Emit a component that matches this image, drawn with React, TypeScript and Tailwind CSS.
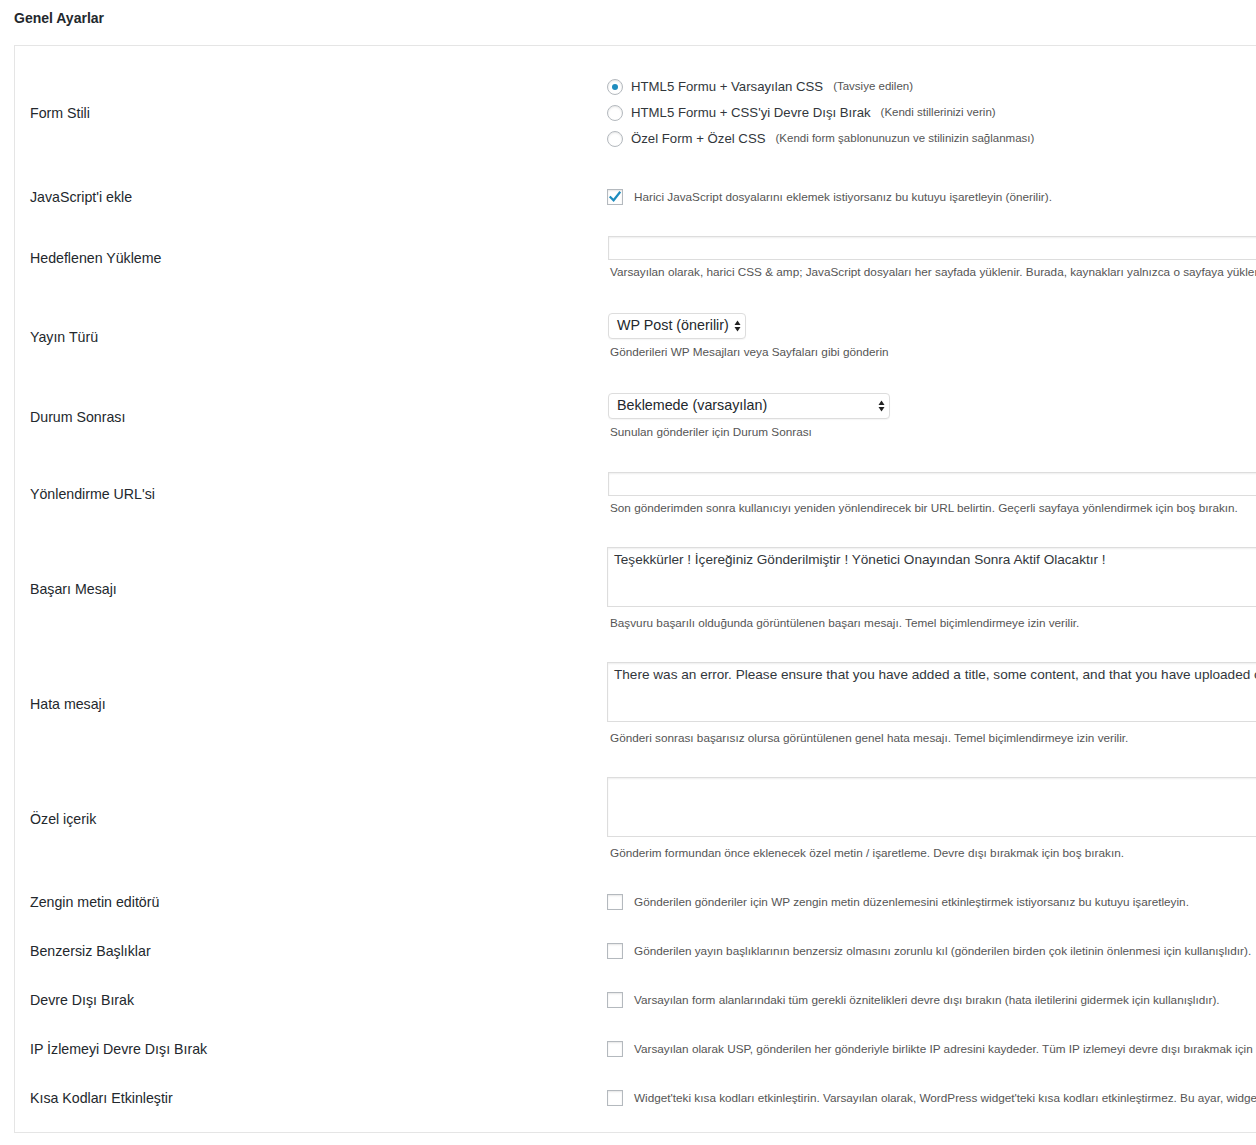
import React from "react";

const FONT = { fontFamily: '"Liberation Sans", Arial, sans-serif' };

function Radio({ checked }: { checked?: boolean }) {
  return (
    <span className="flex h-4 w-4 shrink-0 items-center justify-center rounded-full border border-[#b4b9be] bg-white shadow-[inset_0_1px_2px_rgba(0,0,0,0.1)]">
      {checked && <span className="h-[6px] w-[6px] rounded-full bg-[#1e8cbe]" />}
    </span>
  );
}

function Checkbox({ checked }: { checked?: boolean }) {
  return (
    <span className="relative flex h-4 w-4 shrink-0 items-center justify-center border border-[#b4b9be] bg-white shadow-[inset_0_1px_2px_rgba(0,0,0,0.1)]">
      {checked && (
        <svg width="14" height="14" viewBox="0 0 14 14" className="absolute left-[0px] top-[0px]">
          <path d="M2.5 7.2 L5.6 10.3 L11.6 2.6" fill="none" stroke="#1e8cbe" strokeWidth="2.2" strokeLinecap="square" />
        </svg>
      )}
    </span>
  );
}

function SelectArrows() {
  return (
    <svg width="7" height="12" viewBox="0 0 7 12">
      <path d="M3.5 0.5 L6.5 5 L0.5 5 Z" fill="#222" />
      <path d="M3.5 11.5 L6.5 7 L0.5 7 Z" fill="#222" />
    </svg>
  );
}

function Row({
  label,
  children,
  cls,
}: {
  label: string;
  children: React.ReactNode;
  cls: string;
}) {
  return (
    <div className={`flex items-center ${cls}`}>
      <div className="w-[592px] shrink-0 pl-[15px] text-[14.2px] leading-[18px] text-[#23282d]">{label}</div>
      <div className="flex-1">{children}</div>
    </div>
  );
}

function Desc({ children, cls }: { children: React.ReactNode; cls: string }) {
  return <div className={`whitespace-nowrap pl-[3px] text-[11.75px] leading-[16px] text-[#555] ${cls}`}>{children}</div>;
}

function CheckRow({ label, text }: { label: string; text: string }) {
  return (
    <Row label={label} cls="h-[49px]">
      <div className="flex items-center whitespace-nowrap">
        <Checkbox />
        <span className="ml-[11px] text-[11.75px] leading-[16px] text-[#555]">{text}</span>
      </div>
    </Row>
  );
}

export default function App() {
  return (
    <div className="w-full overflow-hidden bg-white" style={FONT}>
      <div className="h-[45px] pl-[14px] pt-[9px] text-[14px] font-bold leading-[18px] text-[#23282d]">
        Genel Ayarlar
      </div>
      <div className="ml-[14px] w-[1400px] border border-[#e5e5e5] bg-white pb-[10px] pt-[10px]">
        {/* Form Stili */}
        <Row label="Form Stili" cls="pt-[18px] pb-[20px]">
          <div className="flex flex-col">
            <div className="flex h-[26px] items-center whitespace-nowrap">
              <Radio checked />
              <span className="ml-[8px] text-[13.2px] text-[#32373c]">HTML5 Formu + Varsayılan CSS</span>
              <span className="ml-[10px] text-[11.5px] text-[#555]">(Tavsiye edilen)</span>
            </div>
            <div className="flex h-[26px] items-center whitespace-nowrap">
              <Radio />
              <span className="ml-[8px] text-[13.2px] text-[#32373c]">HTML5 Formu + CSS'yi Devre Dışı Bırak</span>
              <span className="ml-[10px] text-[11.5px] text-[#555]">(Kendi stillerinizi verin)</span>
            </div>
            <div className="flex h-[26px] items-center whitespace-nowrap">
              <Radio />
              <span className="ml-[8px] text-[13.2px] text-[#32373c]">Özel Form + Özel CSS</span>
              <span className="ml-[10px] text-[11.5px] text-[#555]">(Kendi form şablonunuzun ve stilinizin sağlanması)</span>
            </div>
          </div>
        </Row>

        {/* JavaScript */}
        <Row label="JavaScript'i ekle" cls="h-[49px]">
          <div className="flex items-center whitespace-nowrap">
            <Checkbox checked />
            <span className="ml-[11px] text-[11.75px] leading-[16px] text-[#555]">
              Harici JavaScript dosyalarını eklemek istiyorsanız bu kutuyu işaretleyin (önerilir).
            </span>
          </div>
        </Row>

        {/* Hedeflenen Yükleme */}
        <Row label="Hedeflenen Yükleme" cls="pt-[15px] pb-[15px]">
          <div className="ml-[1px] h-[24px] w-[800px] border border-[#ddd] bg-white shadow-[inset_0_1px_2px_rgba(0,0,0,0.07)]" />
          <Desc cls="mt-[4px]">
            Varsayılan olarak, harici CSS &amp; amp; JavaScript dosyaları her sayfada yüklenir. Burada, kaynakları yalnızca o sayfaya yüklemek için
          </Desc>
        </Row>

        {/* Yayın Türü */}
        <Row label="Yayın Türü" cls="pt-[18px] pb-[16px]">
          <div className="ml-[1px] flex h-[26px] w-[138px] items-center justify-between rounded-[4px] border border-[#ddd] bg-white pl-[8px] pr-[4px] shadow-[0_1px_1px_rgba(0,0,0,0.04)]">
            <span className="text-[14.3px] text-[#23282d]">WP Post (önerilir)</span>
            <SelectArrows />
          </div>
          <Desc cls="mt-[5px]">Gönderileri WP Mesajları veya Sayfaları gibi gönderin</Desc>
        </Row>

        {/* Durum Sonrası */}
        <Row label="Durum Sonrası" cls="pt-[17px] pb-[16px]">
          <div className="ml-[1px] flex h-[26px] w-[282px] items-center justify-between rounded-[4px] border border-[#ddd] bg-white pl-[8px] pr-[4px] shadow-[0_1px_1px_rgba(0,0,0,0.04)]">
            <span className="text-[14.3px] text-[#23282d]">Beklemede (varsayılan)</span>
            <SelectArrows />
          </div>
          <Desc cls="mt-[5px]">Sunulan gönderiler için Durum Sonrası</Desc>
        </Row>

        {/* Yönlendirme URL'si */}
        <Row label="Yönlendirme URL'si" cls="pt-[16px] pb-[16px]">
          <div className="ml-[1px] h-[24px] w-[800px] border border-[#ddd] bg-white shadow-[inset_0_1px_2px_rgba(0,0,0,0.07)]" />
          <Desc cls="mt-[4px]">
            Son gönderimden sonra kullanıcıyı yeniden yönlendirecek bir URL belirtin. Geçerli sayfaya yönlendirmek için boş bırakın.
          </Desc>
        </Row>

        {/* Başarı Mesajı */}
        <Row label="Başarı Mesajı" cls="pt-[15px] pb-[16px]">
          <div className="h-[60px] w-[800px] whitespace-nowrap border border-[#ddd] bg-white px-[6px] pt-[3px] text-[13.6px] leading-[18px] text-[#32373c] shadow-[inset_0_1px_2px_rgba(0,0,0,0.07)]">
            Teşekkürler ! İçereğiniz Gönderilmiştir ! Yönetici Onayından Sonra Aktif Olacaktır !
          </div>
          <Desc cls="mt-[8px]">Başvuru başarılı olduğunda görüntülenen başarı mesajı. Temel biçimlendirmeye izin verilir.</Desc>
        </Row>

        {/* Hata mesajı */}
        <Row label="Hata mesajı" cls="pt-[15px] pb-[16px]">
          <div className="h-[60px] w-[800px] whitespace-nowrap border border-[#ddd] bg-white px-[6px] pt-[3px] text-[13.6px] leading-[18px] text-[#32373c] shadow-[inset_0_1px_2px_rgba(0,0,0,0.07)]">
            There was an error. Please ensure that you have added a title, some content, and that you have uploaded only images.
          </div>
          <Desc cls="mt-[8px]">Gönderi sonrası başarısız olursa görüntülenen genel hata mesajı. Temel biçimlendirmeye izin verilir.</Desc>
        </Row>

        {/* Özel içerik */}
        <Row label="Özel içerik" cls="pt-[15px] pb-[16px]">
          <div className="h-[60px] w-[800px] border border-[#ddd] bg-white shadow-[inset_0_1px_2px_rgba(0,0,0,0.07)]" />
          <Desc cls="mt-[8px]">Gönderim formundan önce eklenecek özel metin / işaretleme. Devre dışı bırakmak için boş bırakın.</Desc>
        </Row>

        <CheckRow
          label="Zengin metin editörü"
          text="Gönderilen gönderiler için WP zengin metin düzenlemesini etkinleştirmek istiyorsanız bu kutuyu işaretleyin."
        />
        <CheckRow
          label="Benzersiz Başlıklar"
          text="Gönderilen yayın başlıklarının benzersiz olmasını zorunlu kıl (gönderilen birden çok iletinin önlenmesi için kullanışlıdır)."
        />
        <CheckRow
          label="Devre Dışı Bırak"
          text="Varsayılan form alanlarındaki tüm gerekli öznitelikleri devre dışı bırakın (hata iletilerini gidermek için kullanışlıdır)."
        />
        <CheckRow
          label="IP İzlemeyi Devre Dışı Bırak"
          text="Varsayılan olarak USP, gönderilen her gönderiyle birlikte IP adresini kaydeder. Tüm IP izlemeyi devre dışı bırakmak için bu kutuyu işaretleyin."
        />
        <CheckRow
          label="Kısa Kodları Etkinleştir"
          text="Widget'teki kısa kodları etkinleştirin. Varsayılan olarak, WordPress widget'teki kısa kodları etkinleştirmez. Bu ayar, widget'lerde kısa kodları etkinleştirir."
        />
      </div>
    </div>
  );
}
